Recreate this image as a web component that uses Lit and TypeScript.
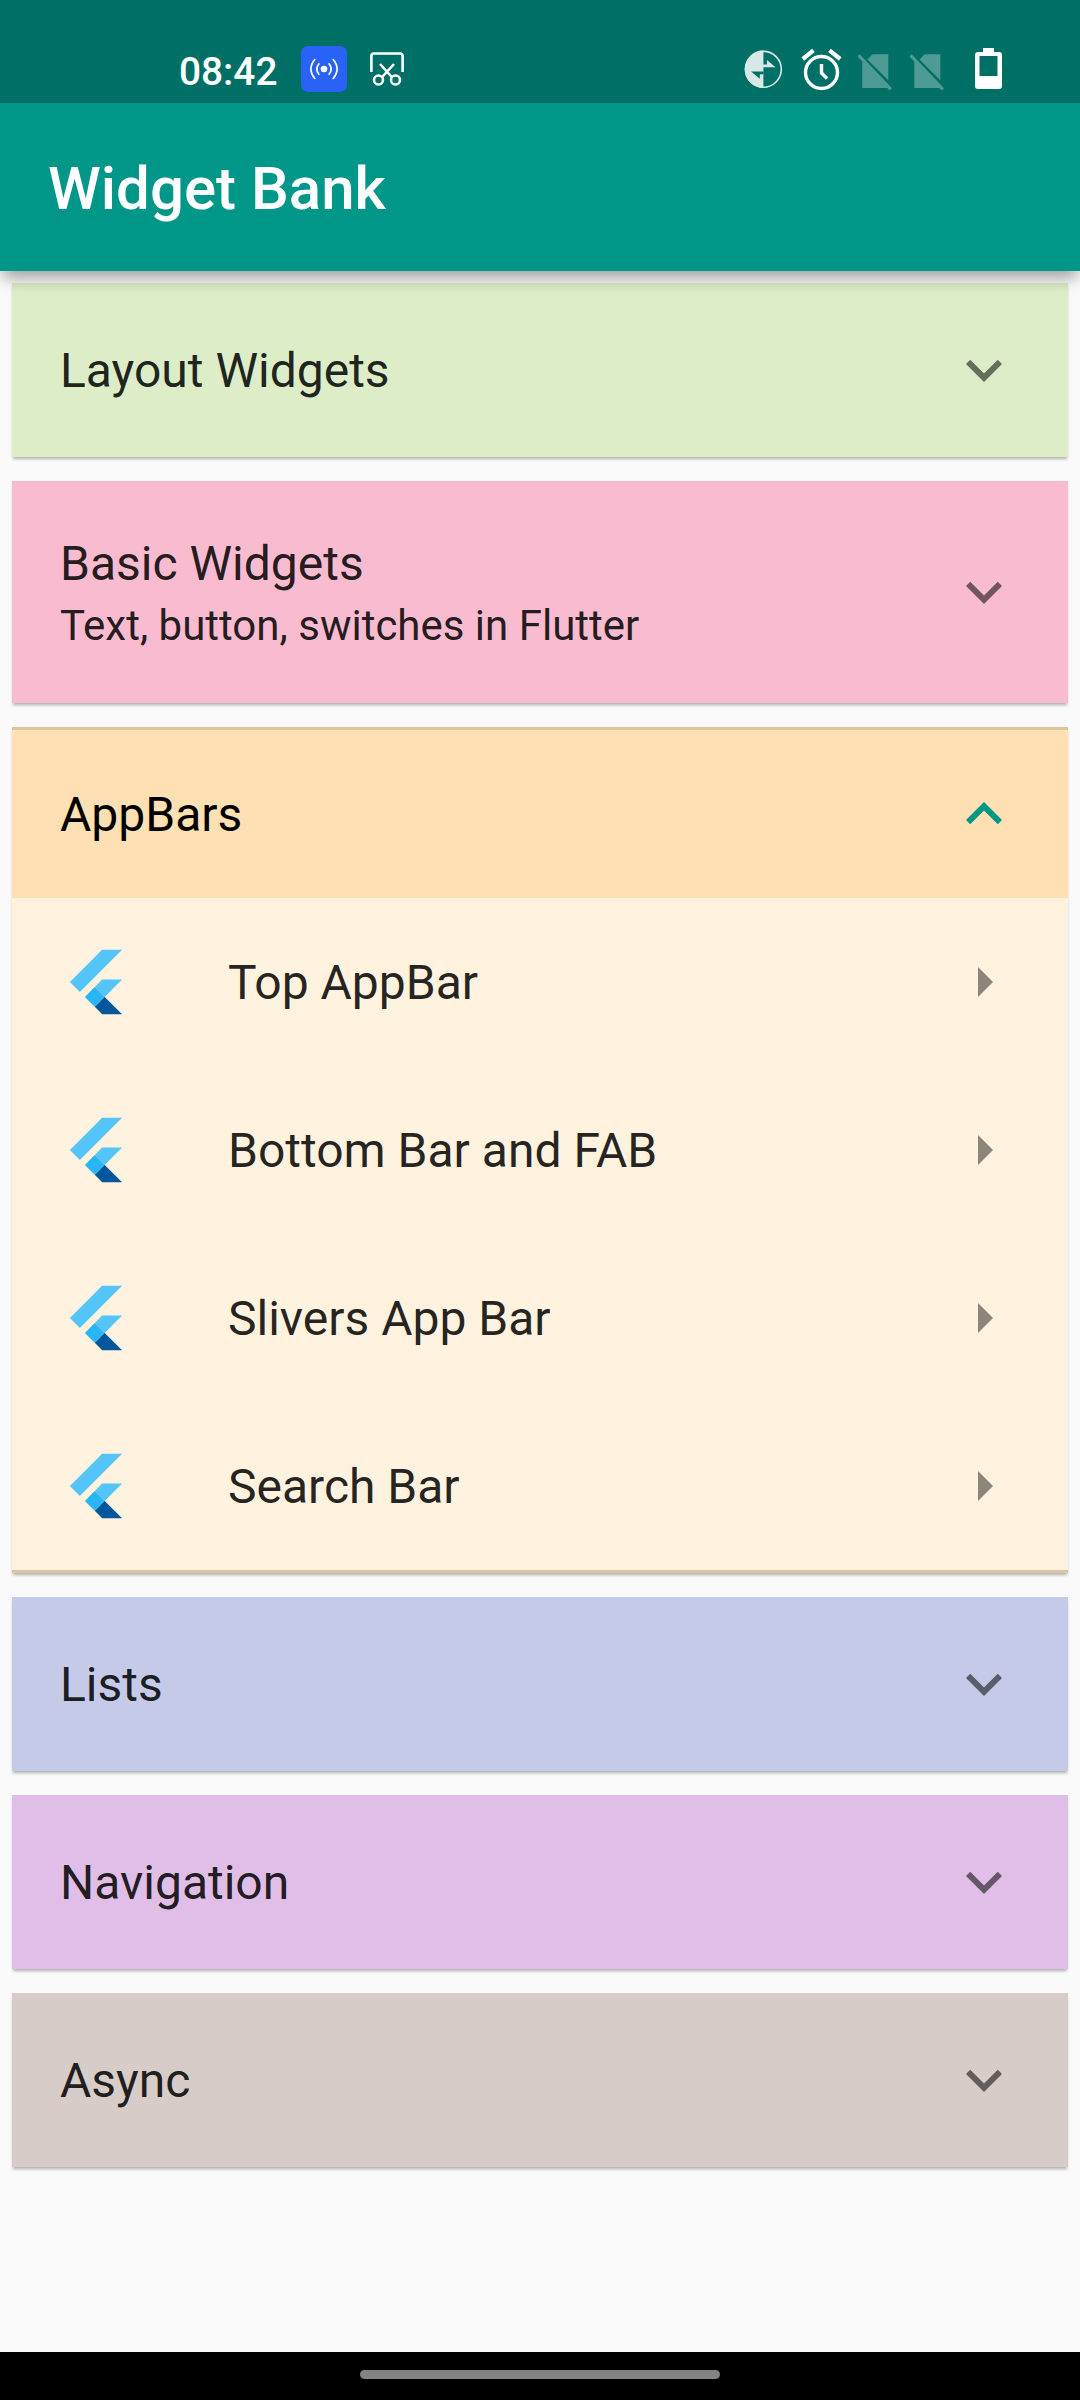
import { LitElement, html, svg, css, nothing } from "lit";
import { customElement, property } from "lit/decorators.js";

interface Section {
  title: string;
  subtitle?: string;
  tone: string;
  items?: string[];
}

const SECTIONS: Section[] = [
  { title: "Layout Widgets", tone: "green" },
  { title: "Basic Widgets", subtitle: "Text, button, switches in Flutter", tone: "pink" },
  {
    title: "AppBars",
    tone: "orange",
    items: ["Top AppBar", "Bottom Bar and FAB", "Slivers App Bar", "Search Bar"],
  },
  { title: "Lists", tone: "indigo" },
  { title: "Navigation", tone: "purple" },
  { title: "Async", tone: "brown" },
];

const flutterLogo = svg`
  <svg class="logo" viewBox="0 0 166 202">
    <path fill="#54c5f8" d="M37.7 128.9 9.8 101 100.4 10.4h55.8z"/>
    <path fill="#54c5f8" d="M156.2 94h-55.8L79.5 114.9l27.9 27.9z"/>
    <path fill="#01579b" d="M79.5 170.7l20.9 20.9h55.8l-48.8-48.8z"/>
    <path fill="#29b6f6" d="M51.6 142.8l27.9-27.9 27.9 27.9-27.9 27.9z"/>
    <path fill="#1a237e" fill-opacity=".35" d="M79.5 170.7l27.9-27.9 4 4-20 12z"/>
  </svg>`;

@customElement("status-bar")
export class StatusBar extends LitElement {
  static styles = css`
    :host {
      display: flex;
      align-items: flex-start;
      box-sizing: border-box;
      height: 103px;
      padding: 46px 78px 0 179px;
      background: #007066;
      color: #fff;
    }
    .clock {
      width: 122px;
      font: 500 38.8px/51px Roboto, sans-serif;
      white-space: nowrap;
    }
    svg {
      display: block;
      flex: none;
      height: 46px;
    }
    .cast { width: 46px; margin-right: 20px; }
    .snip { width: 40px; }
    .spacer { flex: 1; }
    .data { width: 40px; margin-right: 17px; }
    .alarm { width: 41px; margin-right: 15px; }
    .sim { width: 36px; margin-right: 16px; }
    .battery { width: 27px; margin-left: 14px; }
  `;

  private sim() {
    return html`<svg class="sim" viewBox="0 0 36 46">
      <g fill="#fff" opacity=".3">
        <path d="M15.700 8.300h15.600V34.300L10.500 13.500z"/>
        <path d="M.5 10.500 2.700 8.300 35 42.200 32.700 44.500 30.300 42H5.300V15.500z"/>
      </g>
    </svg>`;
  }

  render() {
    return html`
      <span class="clock">08:42</span>
      <svg class="cast" viewBox="0 0 46 46">
        <rect width="46" height="46" rx="7" fill="#2962f6"/>
        <circle cx="23" cy="23" r="3.300" fill="#fff"/>
        <g fill="none" stroke="#fff" stroke-width="1.700">
          <path d="M18.300 17.200q-5 5.800 0 11.600M27.700 17.200q5 5.800 0 11.600"/>
          <path d="M14.200 13q-8.600 10 0 20M31.800 13q8.600 10 0 20"/>
        </g>
      </svg>
      <svg class="snip" viewBox="0 0 40 46">
        <g fill="none" stroke="#fff" stroke-width="2.600">
          <path d="M4.400 26V10q0-2.500 2.500-2.500h26.200q2.500 0 2.500 2.500v16"/>
          <path d="M13 18 24.800 31M27 18 15.200 31"/>
          <circle cx="11.500" cy="34" r="4.500"/>
          <circle cx="28.500" cy="34" r="4.500"/>
        </g>
      </svg>
      <span class="spacer"></span>
      <svg class="data" viewBox="0 0 40 46">
        <circle cx="19.400" cy="23.300" r="17.900" fill="none" stroke="#d6e9e7" stroke-width="1.600"/>
        <path fill="#d6e9e7" d="M19.400 4.600a18.700 18.700 0 0 0 0 37.400z"/>
        <path fill="#d6e9e7" d="M19 18.500h4v-4.500l8.500 7.200H19z"/>
        <path fill="#007066" d="M7 25.500H19.500v2.800h-3.700V32.700z"/>
      </svg>
      <svg class="alarm" viewBox="0 0 41 46">
        <g fill="none" stroke="#fff" stroke-width="3.400">
          <circle cx="20.500" cy="26.500" r="16"/>
          <path stroke-width="4.200" d="M1.800 13 12.500 4.300M28.500 4.300 39.200 13"/>
          <path d="M20.500 18v9l5.500 5.500"/>
        </g>
      </svg>
      ${this.sim()}${this.sim()}
      <svg class="battery" viewBox="0 0 27 46">
        <path fill="#fff" fill-rule="evenodd"
          d="M8 2h11v4h5q3 0 3 3v31q0 3-3 3H3q-3 0-3-3V9q0-3 3-3h5zM4.500 10v20h18V10z"/>
      </svg>
    `;
  }
}

@customElement("expansion-card")
export class ExpansionCard extends LitElement {
  @property({ attribute: false }) section!: Section;

  static styles = css`
    :host { display: block; }
    .card {
      box-sizing: border-box;
      padding: 3px 0;
      color: rgba(0, 0, 0, 0.87);
      box-shadow: 0 3px 3px -1px rgba(0, 0, 0, 0.26), 0 3px 4px -1px rgba(0, 0, 0, 0.06);
    }
    .green { background: #dcedc8; }
    .pink { background: #f8bbd0; }
    .orange { background: #ffe0b2; }
    .indigo { background: #c5cae9; }
    .purple { background: #e1bee7; }
    .brown { background: #d7ccc8; }
    .open {
      padding: 0;
      border-top: 3px solid #dfc4a0;
      border-bottom: 3px solid #dfc4a0;
    }
    .header {
      display: flex;
      align-items: center;
      justify-content: space-between;
      height: 168px;
      padding: 0 48px;
    }
    .two-line { height: 216px; }
    .open .header { color: #000; }
    .title { padding-top: 2px; font-size: 48px; line-height: 56px; }
    .two-line .title { padding-top: 1px; }
    .subtitle { margin-top: 9px; font-size: 42px; line-height: 49px; }
    .icon {
      display: block;
      flex: none;
      width: 72px;
      height: 72px;
      fill: rgba(0, 0, 0, 0.54);
    }
    .up { fill: #009688; }
    .children { background: #fff2df; }
    .row {
      display: flex;
      align-items: center;
      height: 168px;
      padding: 0 48px;
    }
    .logo {
      flex: none;
      width: 72px;
      height: 72px;
      margin-right: 96px;
    }
    .label { flex: 1; padding-top: 2px; font-size: 48px; line-height: 56px; }
    .arrow { fill: rgba(0, 0, 0, 0.45); }
  `;

  render() {
    const { title, subtitle, tone, items } = this.section;
    return html`
      <section class="card ${tone} ${items ? "open" : ""}">
        <div class="header ${subtitle ? "two-line" : ""}">
          <div>
            <div class="title">${title}</div>
            ${subtitle ? html`<div class="subtitle">${subtitle}</div>` : nothing}
          </div>
          ${items
            ? html`<svg class="icon up" viewBox="0 0 24 24"><path d="M12 8l-6 6 1.410 1.410L12 10.830l4.590 4.580L18 14z"/></svg>`
            : html`<svg class="icon" viewBox="0 0 24 24"><path d="M16.590 8.590 12 13.170 7.410 8.590 6 10l6 6 6-6z"/></svg>`}
        </div>
        ${items
          ? html`<div class="children">
              ${items.map(
                (item) => html`<div class="row">
                  ${flutterLogo}
                  <span class="label">${item}</span>
                  <svg class="icon arrow" viewBox="0 0 24 24"><path d="M10 17l5-5-5-5z"/></svg>
                </div>`
              )}
            </div>`
          : nothing}
      </section>
    `;
  }
}

@customElement("app-root")
export class AppRoot extends LitElement {
  static styles = css`
    :host {
      display: flex;
      flex-direction: column;
      width: 1080px;
      height: 2400px;
      overflow: hidden;
      background: #fafafa;
      font-family: Roboto, sans-serif;
    }
    .top {
      position: relative;
      z-index: 1;
      box-shadow: 0 10px 15px -3px rgba(0, 0, 0, 0.36);
    }
    .app-bar {
      display: flex;
      align-items: center;
      box-sizing: border-box;
      height: 168px;
      padding: 2px 48px 0;
      background: #009688;
      color: #fff;
      font-size: 60px;
      font-weight: 500;
    }
    .list {
      display: flex;
      flex: 1;
      flex-direction: column;
      gap: 24px;
      padding: 12px;
    }
    .nav {
      display: flex;
      justify-content: center;
      height: 48px;
      background: #000;
    }
    .pill {
      width: 360px;
      height: 9px;
      margin-top: 18px;
      border-radius: 5px;
      background: #838383;
    }
  `;

  render() {
    return html`
      <header class="top">
        <status-bar></status-bar>
        <div class="app-bar">Widget Bank</div>
      </header>
      <main class="list">
        ${SECTIONS.map((s) => html`<expansion-card .section=${s}></expansion-card>`)}
      </main>
      <footer class="nav"><div class="pill"></div></footer>
    `;
  }
}
